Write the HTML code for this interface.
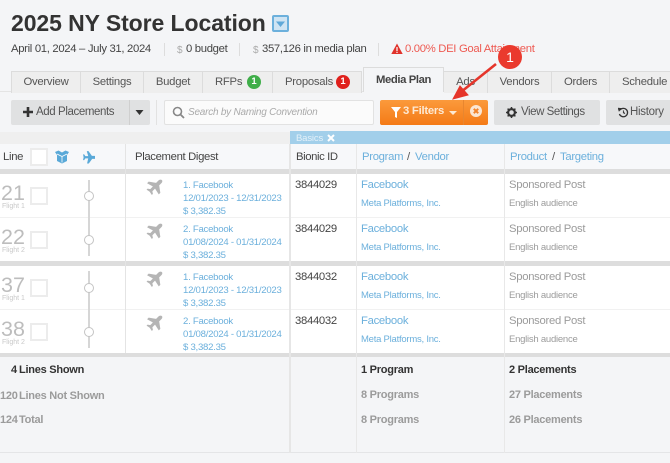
<!DOCTYPE html>
<html><head><meta charset="utf-8">
<style>
html,body{margin:0;padding:0;width:670px;height:463px;overflow:hidden;background:#f4f5f7;font-family:"Liberation Sans",sans-serif;color:#333}
.a{position:absolute;white-space:nowrap}
.r{position:absolute}
.tab{position:absolute;top:71px;height:21px;background:#eeeeee;border:1px solid #dcdcdc;border-bottom:none;border-left:none;font-size:11.3px;letter-spacing:-.25px;color:#555;text-align:center;line-height:21px;box-sizing:content-box}
.btn{position:absolute;top:100px;height:25px;background:#e0e1e2;border-radius:2px;color:#555;line-height:25px}
.bl{color:#6cb0dc}
.d{font-size:9.6px;letter-spacing:-.26px;color:#6cb0dc;line-height:13px}
.gl{background:#ddd}
.cb{position:absolute;width:14px;height:14px;border:2px solid #ececec;background:#fff;left:30px}
.num{position:absolute;left:1px;font-size:21.5px;color:#bdbdbd;line-height:22px}
.fl{position:absolute;left:2px;font-size:7px;color:#c9c9c9}
.circ{position:absolute;left:84px;width:8px;height:8px;border:1px solid #c4c4c4;border-radius:50%;background:#fff}
.s12{font-size:11.3px;letter-spacing:-.3px}
.s10{font-size:9.5px;letter-spacing:-.24px}
.g{color:#9b9b9b}
.b{font-weight:bold;font-size:11px;letter-spacing:-.25px}
.m{font-size:11.3px;letter-spacing:-.32px;color:#444;line-height:15px}
</style></head><body>

<div class="a" style="left:11px;top:8px;font-size:23px;letter-spacing:-.08px;font-weight:bold;color:#333;line-height:30px">2025 NY Store Location</div>
<div class="r" style="left:272px;top:15px;width:13px;height:13px;border:2px solid #6cb0dc;border-radius:2px;background:#cfe4f3"></div>
<svg class="r" style="left:272px;top:15px" width="17" height="17"><path d="M4 6.500h9l-4.500 5.500z" fill="#5fa8d8"/></svg>

<div class="a m" style="left:11px;top:42px">April 01, 2024 – July 31, 2024</div>
<div class="r" style="left:164px;top:43px;width:1px;height:13px;background:#ddd"></div>
<div class="a" style="left:177px;top:43px;font-size:10px;line-height:15px;color:#aaa">$</div>
<div class="a m" style="left:186px;top:42px">0 budget</div>
<div class="r" style="left:239px;top:43px;width:1px;height:13px;background:#ddd"></div>
<div class="a" style="left:253px;top:43px;font-size:10px;line-height:15px;color:#aaa">$</div>
<div class="a m" style="left:262px;top:42px">357,126 in media plan</div>
<div class="r" style="left:378px;top:43px;width:1px;height:13px;background:#ddd"></div>
<svg class="r" style="left:391px;top:43px" width="12" height="12"><path d="M6 .5L11.700 11H.3z" fill="#e0322b"/><path d="M5.400 4h1.200v4H5.400zM5.400 8.800h1.200V10H5.400z" fill="#fff"/></svg>
<div class="a m" style="left:405px;top:42px;color:#ee5a52">0.00% DEI Goal Attainment</div>

<div class="r" style="left:0;top:91px;width:670px;height:1px;background:#e4e4e4"></div>
<div class="tab" style="left:11px;width:68px;border-left:1px solid #dcdcdc">Overview</div>
<div class="tab" style="left:81px;width:62px">Settings</div>
<div class="tab" style="left:144px;width:58px">Budget</div>
<div class="tab" style="left:203px;width:69px;text-align:left;text-indent:12px">RFPs</div>
<div class="r" style="left:247px;top:75px;width:14px;height:14px;border-radius:50%;background:#3fae49;color:#fff;font-size:9.500px;font-weight:bold;line-height:14px;text-align:center">1</div>
<div class="tab" style="left:273px;width:88px;text-align:left;text-indent:12px">Proposals</div>
<div class="r" style="left:336px;top:75px;width:14px;height:14px;border-radius:50%;background:#e0201c;color:#fff;font-size:9.500px;font-weight:bold;line-height:14px;text-align:center">1</div>
<div class="r" style="left:363px;top:67px;width:81px;height:25px;background:#f4f5f7;border:1px solid #dcdcdc;border-bottom:none;box-sizing:border-box;font-size:11.300px;letter-spacing:-.4px;font-weight:bold;color:#444;text-align:center;line-height:25px">Media Plan</div>
<div class="tab" style="left:444px;width:43px">Ads</div>
<div class="tab" style="left:488px;width:63px">Vendors</div>
<div class="tab" style="left:552px;width:57px">Orders</div>
<div class="tab" style="left:610px;width:70px;text-align:left;text-indent:12px">Schedule</div>

<div class="btn" style="left:11px;width:139px"></div>
<div class="r" style="left:129px;top:100px;width:1px;height:25px;background:#cfcfcf"></div>
<svg class="r" style="left:23px;top:107px" width="10" height="10"><path d="M3.700 0h2.600v3.700H10v2.600H6.300V10H3.700V6.300H0V3.700h3.700z" fill="#333"/></svg>
<div class="a" style="left:36px;top:100px;font-size:11.500px;letter-spacing:-.4px;line-height:25px;color:#555">Add Placements</div>
<svg class="r" style="left:135px;top:110px" width="10" height="6"><path d="M.5 0h8L4.500 5z" fill="#333"/></svg>
<div class="r" style="left:156px;top:100px;width:1px;height:25px;background:#e2e2e2"></div>

<div class="r" style="left:164px;top:100px;width:210px;height:25px;background:#fbfbfb;border:1px solid #e2e2e2;border-radius:2px;box-sizing:border-box"></div>
<svg class="r" style="left:172px;top:106px" width="13" height="13"><circle cx="5.500" cy="5.500" r="4" fill="none" stroke="#888" stroke-width="1.600"/><path d="M8.500 8.500l3.500 3.500" stroke="#888" stroke-width="1.800"/></svg>
<div class="a" style="left:188px;top:100px;font-size:10px;letter-spacing:-.23px;font-style:italic;line-height:25px;color:#aaa">Search by Naming Convention</div>

<div class="r" style="left:380px;top:100px;width:108px;height:25px;border-radius:2px;background:linear-gradient(#fb9a3c,#f47a16)"></div>
<div class="r" style="left:463px;top:100px;width:1px;height:25px;background:#e8862f"></div>
<svg class="r" style="left:391px;top:107px" width="10" height="11"><path d="M0 0h10L6 5v6L4 10V5z" fill="#fff"/></svg>
<div class="a" style="left:403px;top:99px;font-size:11.300px;letter-spacing:-.25px;font-weight:bold;line-height:25px;color:#fde9d4">3 Filters</div>
<svg class="r" style="left:449px;top:111px" width="9" height="5"><path d="M0 0h8L4 4z" fill="#fde9d4"/></svg>
<div class="r" style="left:470px;top:105px;width:12px;height:12px;border-radius:50%;background:#fbe6d2"></div>
<svg class="r" style="left:470px;top:105px" width="12" height="12"><path d="M3.800 3.800l4.400 4.400M8.200 3.800L3.800 8.200" stroke="#f2832a" stroke-width="2"/></svg>

<div class="btn" style="left:494px;width:106px"></div>
<svg class="r" style="left:506px;top:107px" width="11" height="11" viewBox="0 0 11 11"><circle cx="5.500" cy="5.500" r="3.400" fill="none" stroke="#333" stroke-width="2.200"/><path d="M5.500 0v11M0 5.500h11M1.600 1.600l7.800 7.800M9.400 1.600L1.600 9.400" stroke="#333" stroke-width="1.500" stroke-dasharray="1.600 7.800 1.600"/></svg>
<div class="a" style="left:521px;top:100px;font-size:11.500px;letter-spacing:-.45px;line-height:25px;color:#555">View Settings</div>
<div class="btn" style="left:606px;width:70px"></div>
<svg class="r" style="left:618px;top:107px" width="11" height="11" viewBox="0 0 11 11"><path d="M2 3a4.200 4.200 0 1 1-.6 4" fill="none" stroke="#333" stroke-width="1.300"/><path d="M0 1l3.600 .4L1 4.400zM5.200 3v3l2 1" fill="#333" stroke="#333" stroke-width=".5"/></svg>
<div class="a" style="left:630px;top:100px;font-size:11.500px;letter-spacing:-.3px;line-height:25px;color:#555">History</div>

<!-- table -->
<div class="r" style="left:0;top:132px;width:290px;height:13px;background:#efefef"></div>
<div class="r" style="left:290px;top:131px;width:380px;height:13px;background:#a2cfea"></div>
<div class="a" style="left:296px;top:132px;font-size:9.500px;letter-spacing:-.15px;line-height:13px;color:#e4f1f9">Basics</div>
<svg class="r" style="left:327px;top:134px" width="8" height="8"><path d="M1 1l6 6M7 1L1 7" stroke="#fff" stroke-width="2"/></svg>

<div class="r" style="left:0;top:144px;width:670px;height:26px;background:#f7f8fa"></div>
<div class="r gl" style="left:0;top:169px;width:670px;height:5px"></div>
<div class="r" style="left:0;top:174px;width:670px;height:87px;background:#fff"></div>
<div class="r gl" style="left:0;top:261px;width:670px;height:5px"></div>
<div class="r" style="left:0;top:266px;width:670px;height:87px;background:#fff"></div>
<div class="r gl" style="left:0;top:353px;width:670px;height:4px"></div>
<div class="r" style="left:0;top:217px;width:670px;height:1px;background:#f1f1f1"></div>
<div class="r" style="left:0;top:309px;width:670px;height:1px;background:#f1f1f1"></div>
<div class="r" style="left:0;top:452px;width:670px;height:1px;background:#e4e5e7"></div>

<div class="r" style="left:125px;top:144px;width:1px;height:209px;background:#e4e4e4"></div>
<div class="r" style="left:289px;top:144px;width:2px;height:309px;background:#e6e6e6"></div>
<div class="r" style="left:356px;top:144px;width:1px;height:309px;background:#e8e8e8"></div>
<div class="r" style="left:504px;top:144px;width:1px;height:309px;background:#e8e8e8"></div>

<div class="a s12" style="left:3px;top:150px;line-height:15px;color:#444">Line</div>
<div class="r" style="left:30px;top:148px;width:14px;height:14px;border:2px solid #ececec;background:#fff"></div>
<svg class="r" style="left:55px;top:150px" width="14" height="14" viewBox="0 0 14 14"><path d="M0 2l3.500-1.500L7 2.500l3.500-2L14 2l-2 3v6l-5 2.500L2 11V5z" fill="#5aa9d8"/><path d="M2 4l5 2.500L12 4M7 6.500v6" stroke="#fff" stroke-width=".8" fill="none"/></svg>
<svg class="r" style="left:81.500px;top:151px" width="13" height="13" viewBox="0 0 16 16"><g transform="rotate(45 8 8)"><path d="M15 1C14 .3 12.500 .6 11.500 1.600L9.500 3.600 2.500 2.500 1 4 6.500 7 4 9.500 1.500 9 .5 10 3.500 12 5.500 15 6.500 14 6 11.500 8.500 9 12 14.500 13.500 13 12.400 6 14.400 4C15.400 3 15.700 1.700 15 1z" fill="#5aa9d8"/></g></svg>
<div class="a s12" style="left:135px;top:150px;letter-spacing:-.34px;line-height:15px;color:#444">Placement Digest</div>
<div class="a s12" style="left:296px;top:150px;letter-spacing:-.4px;line-height:15px;color:#444">Bionic ID</div>
<div class="a s12 bl" style="left:362px;top:150px;line-height:15px">Program</div><div class="a s12" style="left:407px;top:150px;line-height:15px;color:#555">/</div><div class="a s12 bl" style="left:415px;top:150px;line-height:15px">Vendor</div>
<div class="a s12 bl" style="left:510px;top:150px;line-height:15px">Product</div><div class="a s12" style="left:552px;top:150px;line-height:15px;color:#555">/</div><div class="a s12 bl" style="left:560px;top:150px;line-height:15px">Targeting</div>

<!-- Left rows -->
<div class="num" style="top:182px">21</div><div class="fl" style="top:203px">Flight 1</div><div class="cb" style="top:187px"></div>
<div class="num" style="top:226px">22</div><div class="fl" style="top:247px">Flight 2</div><div class="cb" style="top:231px"></div>
<div class="num" style="top:274px">37</div><div class="fl" style="top:295px">Flight 1</div><div class="cb" style="top:279px"></div>
<div class="num" style="top:318px">38</div><div class="fl" style="top:339px">Flight 2</div><div class="cb" style="top:323px"></div>

<div class="r" style="left:88px;top:180px;width:1.500px;height:76px;background:#d6d6d6"></div>
<div class="r" style="left:88px;top:271px;width:1.500px;height:77px;background:#d6d6d6"></div>
<div class="circ" style="top:191px"></div>
<div class="circ" style="top:235px"></div>
<div class="circ" style="top:283px"></div>
<div class="circ" style="top:327px"></div>

<svg class="r" style="left:146px;top:179px" width="17" height="17" viewBox="0 0 16 16"><path d="M15 1C14 .3 12.500 .6 11.500 1.600L9.500 3.600 2.500 2.500 1 4 6.500 7 4 9.500 1.500 9 .5 10 3.500 12 5.500 15 6.500 14 6 11.500 8.500 9 12 14.500 13.500 13 12.400 6 14.400 4C15.400 3 15.700 1.700 15 1z" fill="#b5b5b5"/></svg>
<svg class="r" style="left:146px;top:223px" width="17" height="17" viewBox="0 0 16 16"><path d="M15 1C14 .3 12.500 .6 11.500 1.600L9.500 3.600 2.500 2.500 1 4 6.500 7 4 9.500 1.500 9 .5 10 3.500 12 5.500 15 6.500 14 6 11.500 8.500 9 12 14.500 13.500 13 12.400 6 14.400 4C15.400 3 15.700 1.700 15 1z" fill="#b5b5b5"/></svg>
<svg class="r" style="left:146px;top:271px" width="17" height="17" viewBox="0 0 16 16"><path d="M15 1C14 .3 12.500 .6 11.500 1.600L9.500 3.600 2.500 2.500 1 4 6.500 7 4 9.500 1.500 9 .5 10 3.500 12 5.500 15 6.500 14 6 11.500 8.500 9 12 14.500 13.500 13 12.400 6 14.400 4C15.400 3 15.700 1.700 15 1z" fill="#b5b5b5"/></svg>
<svg class="r" style="left:146px;top:315px" width="17" height="17" viewBox="0 0 16 16"><path d="M15 1C14 .3 12.500 .6 11.500 1.600L9.500 3.600 2.500 2.500 1 4 6.500 7 4 9.500 1.500 9 .5 10 3.500 12 5.500 15 6.500 14 6 11.500 8.500 9 12 14.500 13.500 13 12.400 6 14.400 4C15.400 3 15.700 1.700 15 1z" fill="#b5b5b5"/></svg>

<div class="a d" style="left:183px;top:179px">1. Facebook</div><div class="a d" style="left:183px;top:192px">12/01/2023 - 12/31/2023</div><div class="a d" style="left:183px;top:205px">$ 3,382.35</div>
<div class="a d" style="left:183px;top:223px">2. Facebook</div><div class="a d" style="left:183px;top:236px">01/08/2024 - 01/31/2024</div><div class="a d" style="left:183px;top:249px">$ 3,382.35</div>
<div class="a d" style="left:183px;top:271px">1. Facebook</div><div class="a d" style="left:183px;top:284px">12/01/2023 - 12/31/2023</div><div class="a d" style="left:183px;top:297px">$ 3,382.35</div>
<div class="a d" style="left:183px;top:315px">2. Facebook</div><div class="a d" style="left:183px;top:328px">01/08/2024 - 01/31/2024</div><div class="a d" style="left:183px;top:341px">$ 3,382.35</div>

<!-- ID -->
<div class="a s12" style="left:295px;top:178px;line-height:15px;color:#444">3844029</div>
<div class="a s12" style="left:295px;top:222px;line-height:15px;color:#444">3844029</div>
<div class="a s12" style="left:295px;top:270px;line-height:15px;color:#444">3844032</div>
<div class="a s12" style="left:295px;top:314px;line-height:15px;color:#444">3844032</div>

<div class="a s12 bl" style="left:361px;top:178px;line-height:15px">Facebook</div><div class="a s10 bl" style="left:361px;top:197px;line-height:13px">Meta Platforms, Inc.</div>
<div class="a s12 bl" style="left:361px;top:222px;line-height:15px">Facebook</div><div class="a s10 bl" style="left:361px;top:241px;line-height:13px">Meta Platforms, Inc.</div>
<div class="a s12 bl" style="left:361px;top:270px;line-height:15px">Facebook</div><div class="a s10 bl" style="left:361px;top:289px;line-height:13px">Meta Platforms, Inc.</div>
<div class="a s12 bl" style="left:361px;top:314px;line-height:15px">Facebook</div><div class="a s10 bl" style="left:361px;top:333px;line-height:13px">Meta Platforms, Inc.</div>

<div class="a s12 g" style="left:509px;top:178px;line-height:15px">Sponsored Post</div><div class="a s10 g" style="left:509px;top:197px;line-height:13px">English audience</div>
<div class="a s12 g" style="left:509px;top:222px;line-height:15px">Sponsored Post</div><div class="a s10 g" style="left:509px;top:241px;line-height:13px">English audience</div>
<div class="a s12 g" style="left:509px;top:270px;line-height:15px">Sponsored Post</div><div class="a s10 g" style="left:509px;top:289px;line-height:13px">English audience</div>
<div class="a s12 g" style="left:509px;top:314px;line-height:15px">Sponsored Post</div><div class="a s10 g" style="left:509px;top:333px;line-height:13px">English audience</div>

<!-- Footer -->
<div class="a b" style="left:11px;top:363px;line-height:15px;color:#333">4</div><div class="a b" style="left:19px;top:363px;line-height:15px;color:#333">Lines Shown</div>
<div class="a b g" style="left:0;top:389px;line-height:15px">120</div><div class="a b g" style="left:19px;top:389px;line-height:15px">Lines Not Shown</div>
<div class="a b g" style="left:0;top:413px;line-height:15px">124</div><div class="a b g" style="left:19px;top:413px;line-height:15px">Total</div>
<div class="a b" style="left:361px;top:363px;line-height:15px;color:#333">1 Program</div>
<div class="a b g" style="left:361px;top:388px;line-height:15px">8 Programs</div>
<div class="a b g" style="left:361px;top:413px;line-height:15px">8 Programs</div>
<div class="a b" style="left:509px;top:363px;line-height:15px;color:#333">2 Placements</div>
<div class="a b g" style="left:509px;top:388px;line-height:15px">27 Placements</div>
<div class="a b g" style="left:509px;top:413px;line-height:15px">26 Placements</div>

<!-- Annotation -->
<svg class="r" style="left:445px;top:60px" width="60" height="45"><path d="M51 4L16 32" stroke="#e5352b" stroke-width="2.600"/><path d="M8 39L15 26L23 35z" fill="#e5352b" stroke="#e5352b" stroke-width="1"/></svg>
<div class="r" style="left:498px;top:45px;width:24px;height:24px;border-radius:50%;background:#ea3a2e;color:#fff;font-size:14px;line-height:24px;text-align:center">1</div>

</body></html>
